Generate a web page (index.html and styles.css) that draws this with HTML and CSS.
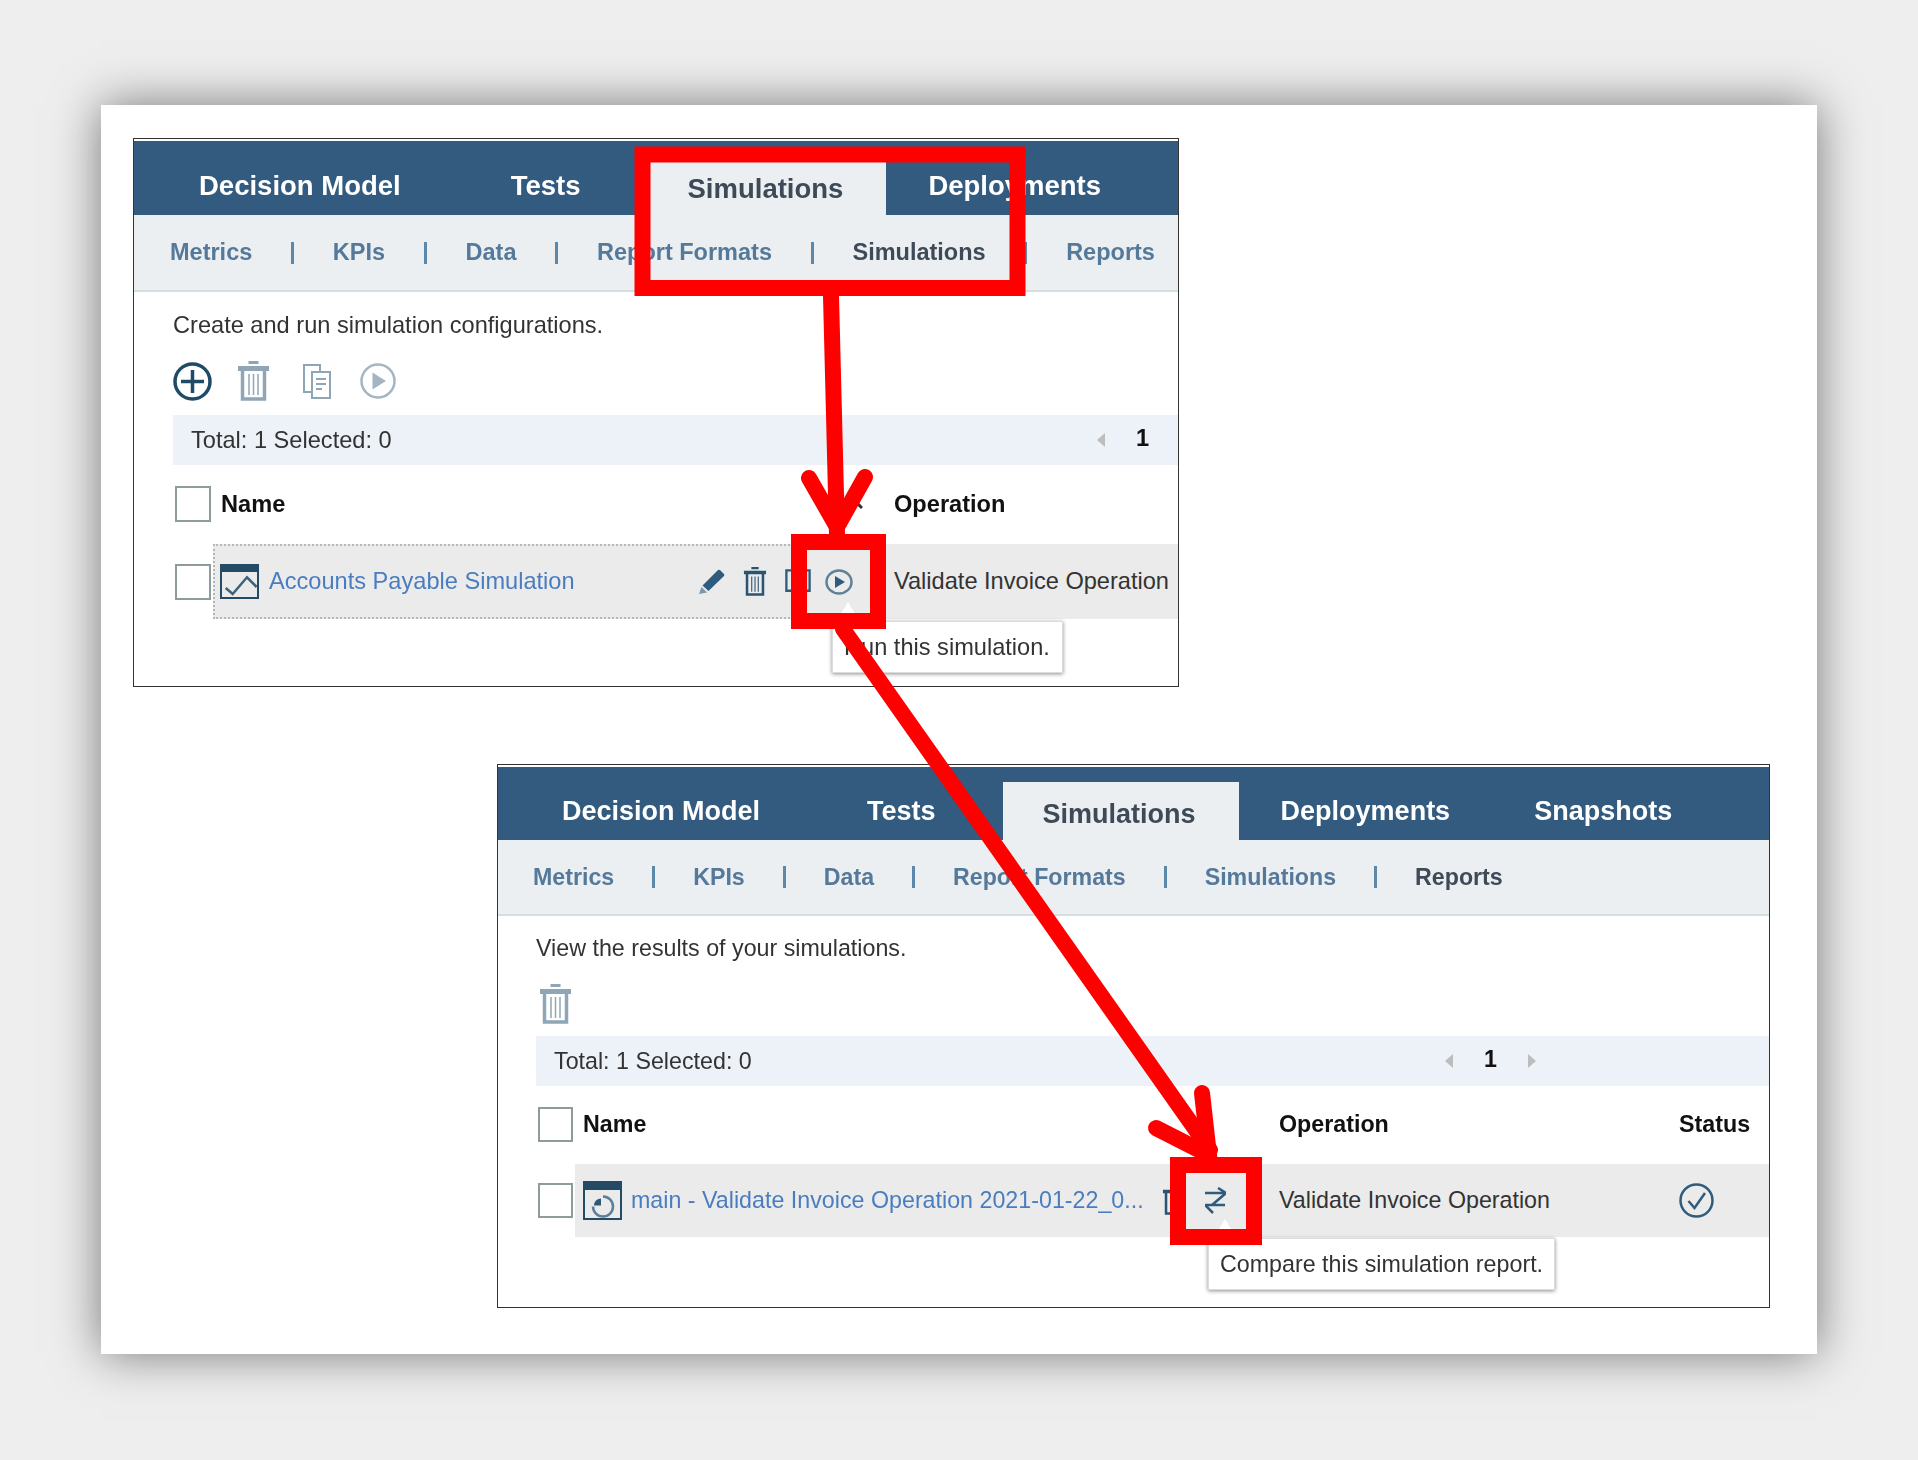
FILE: index.html
```html
<!DOCTYPE html>
<html lang="en">
<head>
<meta charset="utf-8">
<title>Simulations</title>
<link rel="stylesheet" href="styles.css">
</head>
<body>
<main class="sheet">
  <section class="panel panel-a">
    <nav class="tabs">
      <a class="tab tab-first">Decision Model</a>
      <a class="tab">Tests</a>
      <a class="tab tab-active">Simulations</a>
      <a class="tab">Deployments</a>
    </nav>
    <nav class="subtabs">
      <a class="subtab">Metrics</a><i class="sep"></i>
      <a class="subtab">KPIs</a><i class="sep"></i>
      <a class="subtab">Data</a><i class="sep"></i>
      <a class="subtab">Report Formats</a><i class="sep"></i>
      <a class="subtab subtab-active">Simulations</a><i class="sep"></i>
      <a class="subtab">Reports</a>
    </nav>
    <div class="content">
      <p class="desc">Create and run simulation configurations.</p>
      <div class="toolbar">
        <svg class="ic-plus" viewBox="0 0 39 39"><circle cx="19.5" cy="19.5" r="17.5"/><path d="M19.5 8v23M8 19.5h23"/></svg>
        <svg class="ic-trash ic-off" viewBox="0 0 31 40"><use href="#trash"/></svg>
        <svg class="ic-copy ic-off" viewBox="0 0 28 35"><use href="#copy"/></svg>
        <svg class="ic-play ic-off" viewBox="0 0 36 36"><circle class="ring" cx="18" cy="18" r="16.5"/><path class="tri" d="M12.500 9.500 26 18l-13.500 8.500z"/></svg>
      </div>
      <div class="bar">
        <span>Total: 1 Selected: 0</span>
        <div class="pager">
          <svg class="pg-arrow" viewBox="0 0 8 14"><path d="M8 0v14L0 7z"/></svg>
          <b class="pg-num">1</b>
        </div>
      </div>
      <div class="head">
        <span class="check"></span>
        <div class="col-name"><b>Name</b><svg class="sort" viewBox="0 0 16 10"><path d="M1 9 8 2l7 7"/></svg></div>
        <b class="col-op">Operation</b>
      </div>
      <div class="row">
        <span class="check"></span>
        <div class="col-name cell cell-focus">
          <svg class="ic-doc" viewBox="0 0 39 35"><rect x="1" y="1" width="37" height="33"/><rect class="fill" x="0" y="0" width="39" height="8"/><path d="M5.700 24l7 6L27 13.300 36.700 23"/></svg>
          <a class="link">Accounts Payable Simulation</a>
          <div class="actions">
            <svg class="ic-pencil" viewBox="0 0 26 25"><path class="fill" d="M3.500 16.500 18.500 1.500a2 2 0 0 1 3 0l3 3a2 2 0 0 1 0 3L9.500 22z"/><path class="tip" d="M2.500 18 8 23.500 0 25z"/></svg>
            <svg class="ic-trash" viewBox="0 0 31 40"><use href="#trash"/></svg>
            <svg class="ic-copy-on" viewBox="0 0 28 25"><path d="M1.500 1.500h25v22h-25z"/></svg>
            <svg class="ic-play" viewBox="0 0 28 26"><ellipse class="ring" cx="14" cy="13" rx="12.500" ry="11.500"/><path class="tri" d="M10 7l10 6-10 6z"/></svg>
          </div>
        </div>
        <div class="col-op cell">Validate Invoice Operation</div>
      </div>
      <div class="tip-box tip-a">Run this simulation.</div>
    </div>
  </section>

  <section class="panel panel-b">
    <nav class="tabs">
      <a class="tab tab-first">Decision Model</a>
      <a class="tab">Tests</a>
      <a class="tab tab-active">Simulations</a>
      <a class="tab tab-tight">Deployments</a>
      <a class="tab">Snapshots</a>
    </nav>
    <nav class="subtabs">
      <a class="subtab">Metrics</a><i class="sep"></i>
      <a class="subtab">KPIs</a><i class="sep"></i>
      <a class="subtab">Data</a><i class="sep"></i>
      <a class="subtab">Report Formats</a><i class="sep"></i>
      <a class="subtab">Simulations</a><i class="sep"></i>
      <a class="subtab subtab-active">Reports</a>
    </nav>
    <div class="content">
      <p class="desc">View the results of your simulations.</p>
      <div class="toolbar">
        <svg class="ic-trash ic-off" viewBox="0 0 31 40"><use href="#trash"/></svg>
      </div>
      <div class="bar">
        <span>Total: 1 Selected: 0</span>
        <div class="pager">
          <svg class="pg-arrow" viewBox="0 0 8 14"><path d="M8 0v14L0 7z"/></svg>
          <b class="pg-num">1</b>
          <svg class="pg-arrow" viewBox="0 0 8 14"><path d="M0 0v14l8-7z"/></svg>
        </div>
      </div>
      <div class="head">
        <span class="check"></span>
        <div class="col-name"><b>Name</b></div>
        <b class="col-op">Operation</b>
        <b class="col-status">Status</b>
      </div>
      <div class="row">
        <span class="check"></span>
        <div class="col-name cell">
          <svg class="ic-doc" viewBox="0 0 39 39"><rect x="1" y="1" width="37" height="37"/><rect class="fill" x="0" y="0" width="39" height="9"/><path class="soft" d="M20 15.500a10 10 0 1 1-10 10"/><path class="wedge" d="M18 17.500v7h-7a7 7 0 0 1 7-7z"/></svg>
          <a class="link">main - Validate Invoice Operation 2021-01-22_0...</a>
          <div class="actions">
            <svg class="ic-trash" viewBox="0 0 31 40"><use href="#trash"/></svg>
            <svg class="ic-compare" viewBox="0 0 21 28"><path d="M0 6h21M13 1l8 5L7 18M0 18h20M0 18l8 8"/></svg>
          </div>
        </div>
        <div class="col-op cell">Validate Invoice Operation</div>
        <div class="col-status cell">
          <svg class="ic-ok" viewBox="0 0 35 35"><circle cx="17.500" cy="17.500" r="16"/><path d="M9.500 18l6 7L26 10"/></svg>
        </div>
      </div>
      <div class="tip-box tip-b">Compare this simulation report.</div>
    </div>
  </section>
</main>

<svg class="annot" viewBox="0 0 1918 1460">
  <g class="ann-line">
    <path d="M831 296 837 534"/>
    <path d="M809 478 837 527 865 477"/>
    <path d="M843 629 1210 1150"/>
    <path d="M1156 1128 1209 1155 1202 1093"/>
  </g>
  <rect class="ann-box" x="642.500" y="154.500" width="375" height="133.500"/>
  <rect class="ann-box" x="799" y="542" width="79" height="79"/>
  <rect class="ann-box" x="1178" y="1165" width="76" height="72"/>
</svg>

<svg class="defs" aria-hidden="true">
  <symbol id="trash" viewBox="0 0 31 40">
    <path fill="currentColor" d="M10.500 0h10v3h-10zM0 5h31v5H0z"/>
    <path fill="none" stroke="currentColor" stroke-width="3.500" d="M4.500 9v29h22V9"/>
    <path fill="none" stroke="currentColor" stroke-width="1.500" d="M11 13v21M15.500 13v21M20 13v21"/>
  </symbol>
  <symbol id="copy" viewBox="0 0 28 35">
    <path fill="none" stroke="currentColor" stroke-width="2" d="M9 28H1V1h16v7"/>
    <path fill="none" stroke="currentColor" stroke-width="2" d="M9 8h18v26H9z"/>
    <path fill="none" stroke="currentColor" stroke-width="2" d="M13 15h10M13 20h10M13 25h6"/>
  </symbol>
</svg>
</body>
</html>
```

FILE: styles.css
```css
* { box-sizing: border-box; }

html, body {
  margin: 0;
  height: 1460px;
  overflow: hidden;
}

body {
  position: relative;
  padding-top: 105px;
  background: #eeeeee;
  font-family: "Liberation Sans", Arial, sans-serif;
  color: #333;
}

.sheet {
  width: 1716px;
  height: 1249px;
  margin-left: 101px;
  padding: 33px 0 0 32px;
  background: #fff;
  box-shadow: 0 0 45px rgba(0, 0, 0, .5);
}

/* panels */
.panel {
  position: relative;
  border: 1px solid #333;
  padding-top: 2px;
  filter: blur(.65px);
}
.panel-a { width: 1046px; height: 549px; font-size: 23.6px; }
.panel-b { width: 1273px; height: 544px; margin: 77px 0 0 364px; font-size: 23.25px; }

/* main tabs */
.tabs {
  display: flex;
  align-items: stretch;
  height: 74px;
  padding-left: 23px;
  background: #325b7f;
}
.panel-b .tabs { height: 73px; padding-left: 22px; }

.tab {
  display: flex;
  align-items: center;
  padding: 16px 42px 0;
  margin-right: 26px;
  color: #fff;
  font-size: 27.5px;
  font-weight: 700;
  white-space: nowrap;
}
.panel-b .tab { font-size: 27px; }
.panel-b .tab-first { margin-right: 23px; }
.tab-active,
.panel-b .tab-active {
  margin: 15px 0 0;
  padding: 6px 43px 0 39px;
  background: #eceff2;
  color: #3f4a58;
}
.panel-b .tab-active { padding-left: 40px; margin-left: -1px; }
.tab-tight { margin-right: 0; }

/* sub navigation */
.subtabs {
  display: flex;
  align-items: center;
  gap: 38.750px;
  height: 77px;
  padding: 0 0 0 36px;
  background: #eceff2;
  border-bottom: 2px solid #d5dee0;
  font-size: 23.5px;
}
.panel-b .subtabs { height: 76px; gap: 38px; padding-left: 35px; font-size: 23.2px; }

.subtab {
  flex: none;
  color: #55799a;
  font-weight: 700;
  white-space: nowrap;
}
.subtab-active { color: #3f4a58; }

.sep {
  flex: none;
  width: 3px;
  height: 22px;
  background: #5d87a8;
}

/* content */
.content { padding-left: 39px; }
.panel-b .content { padding-left: 38px; }

.desc {
  margin: 0;
  padding-top: 20px;
  line-height: 26px;
  color: #333;
}
.panel-b .desc { padding-top: 19px; }

.toolbar {
  display: flex;
  align-items: center;
  height: 40px;
  margin-top: 23px;
  gap: 27px;
}
.panel-b .toolbar { padding-left: 4px; }
.panel-a .ic-plus { margin-right: -1px; }

.ic-plus { width: 39px; height: 39px; fill: none; stroke: #1f4a68; stroke-width: 3.5; }
.ic-trash { width: 31px; height: 40px; color: #2a5472; }
.ic-off { color: #8fa6b6; }
.toolbar .ic-copy { width: 28px; height: 35px; margin: 0 2px 0 7px; }
.toolbar .ic-play { width: 36px; height: 36px; }
.ring { fill: none; stroke: #7f9aab; stroke-width: 2.500; }
.tri { fill: #5a7f96; }
.ic-off .ring { stroke: #a4b6c2; }
.ic-off .tri { fill: #a4b6c2; }

.bar {
  display: flex;
  align-items: center;
  height: 50px;
  margin-top: 14px;
  padding-left: 18px;
  background: #edf1f8;
}
.panel-b .bar { margin-top: 12px; padding-left: 18px; }

.pager {
  display: flex;
  align-items: center;
  margin-left: auto;
  margin-right: 29px;
  gap: 31px;
}
.panel-b .pager { margin-right: 233px; }
.pg-arrow { width: 8px; height: 14px; fill: #bdbdbd; }
.pg-num { margin-top: -4px; color: #111; }

/* table */
.head, .row { display: flex; align-items: center; }
.head { height: 36px; margin-top: 21px; color: #111; }
.panel-b .head { margin-top: 20px; }
.head .col-name { padding-left: 8px; }

.row {
  height: 75px;
  margin-top: 22px;
}
.panel-b .row { height: 73px; }

.check {
  flex: none;
  width: 36px;
  height: 36px;
  margin: 0 2px;
  background: #fff;
  border: 2px solid #8d9b9b;
}
.panel-b .check { width: 35px; height: 35px; }

.col-name {
  flex: none;
  display: flex;
  align-items: center;
  width: 672px;
  padding-left: 7px;
}
.col-op { flex: none; padding-left: 9px; }
.panel-b .col-name { width: 695px; padding-left: 8px; }
.panel-b .col-op { width: 409px; }
.head .col-op { color: #111; }

.cell {
  height: 100%;
  background: #ebebeb;
  display: flex;
  align-items: center;
}
.panel-a .col-op.cell { flex: 1; }
.panel-b .col-status.cell { flex: 1; }
.cell-focus {
  border: 2px dotted #b4b8b8;
  border-right: 0;
  padding-left: 5px;
}

.sort {
  width: 16px;
  height: 10px;
  margin: 0 22px 0 auto;
  fill: none;
  stroke: #333;
  stroke-width: 3;
}

.ic-doc { flex: none; width: 39px; height: 35px; fill: none; stroke: #234b66; stroke-width: 2; }
.panel-b .ic-doc { height: 39px; }
.ic-doc .fill { fill: #234b66; stroke: none; }
.ic-doc path { stroke: #3d6279; stroke-width: 2.500; }
.ic-doc .soft { fill: none; stroke: #5a7f96; }
.ic-doc .wedge { fill: #2d5a75; stroke: none; }

.link {
  margin-left: 10px;
  color: #4a7dc0;
  white-space: nowrap;
}
.panel-b .link { margin-left: 9px; }

.actions {
  display: flex;
  align-items: center;
  margin-left: auto;
  padding-right: 32px;
}
.panel-b .actions { padding-right: 51px; }
.actions .ic-trash { width: 24px; height: 29px; margin: 0 0 0 18px; }
.ic-pencil { width: 26px; height: 25px; }
.ic-pencil .fill { fill: #2f5c7d; }
.ic-pencil .tip { fill: #7a97ab; }
.ic-copy-on {
  width: 26px;
  height: 25px;
  margin: -2px 14px 0 18px;
  fill: none;
  stroke: #2f5c7d;
  stroke-width: 2.500;
}
.actions .ic-play { width: 28px; height: 26px; }
.actions .ring { stroke: #5f8196; }
.actions .tri { fill: #2f5c7d; }
.ic-compare {
  width: 21px;
  height: 28px;
  margin-left: 19px;
  fill: none;
  stroke: #2f5c7d;
  stroke-width: 2.500;
}
.ic-ok { width: 35px; height: 35px; fill: none; stroke: #2f5c7d; stroke-width: 2.500; }

/* tooltips */
.tip-box {
  position: absolute;
  height: 52px;
  padding: 0 11px;
  display: flex;
  align-items: center;
  background: #fff;
  border: 1px solid #dcdcdc;
  box-shadow: 0 1px 4px rgba(0, 0, 0, .45);
  white-space: nowrap;
  color: #333;
}
.tip-box::before {
  content: "";
  position: absolute;
  top: -20px;
  width: 24px;
  height: 20px;
  background: #fff;
  clip-path: polygon(50% 0, 100% 100%, 0 100%);
}
.tip-a { left: 698px; top: 482px; width: 231px; }
.tip-a::before { left: 3px; }
.tip-b { left: 710px; top: 473px; width: 347px; }
.tip-b::before { left: 4px; }

/* annotation layer */
.annot {
  position: absolute;
  left: 0;
  top: 0;
  width: 1918px;
  height: 1460px;
  pointer-events: none;
}
.ann-line path {
  fill: none;
  stroke: #ff0000;
  stroke-width: 16;
  stroke-linecap: round;
  stroke-linejoin: miter;
  stroke-miterlimit: 6;
}
.ann-box {
  fill: none;
  stroke: #ff0000;
  stroke-width: 16;
}

.defs { position: absolute; width: 0; height: 0; }
```
